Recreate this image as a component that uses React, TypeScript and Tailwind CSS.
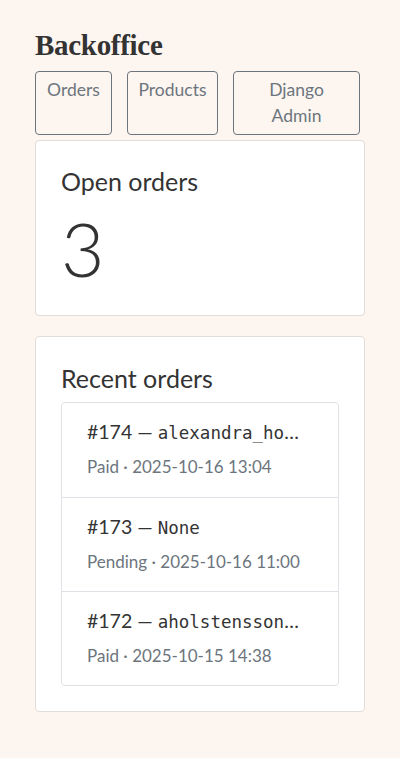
import React from 'react';

const orders = [
  { id: 174, user: 'alexandra_holstensson', status: 'Paid', date: '2025-10-16 13:04' },
  { id: 173, user: 'None', status: 'Pending', date: '2025-10-16 11:00' },
  { id: 172, user: 'aholstensson_test', status: 'Paid', date: '2025-10-15 14:38' },
];

const App: React.FC = () => {
  return (
    <div className="min-h-[758px] bg-[#fdf6f0] px-[35px] pt-[28px] pb-10 font-['Lato','Noto_Sans',sans-serif] text-[#333]">
      <h1 className="font-['Liberation_Serif','DejaVu_Serif',serif] text-[29px] font-bold leading-[34px] tracking-[-0.3px] text-[#333]">
        Backoffice
      </h1>

      {/* Nav buttons */}
      <div className="mt-[9px] flex items-stretch gap-[15px]">
        <a className="w-[77px] rounded border border-[#6c757d] px-2 pt-[5px] text-center text-[17.5px] leading-[26px] text-[#6c757d]">
          Orders
        </a>
        <a className="w-[91px] rounded border border-[#6c757d] px-2 pt-[5px] text-center text-[17.5px] leading-[26px] text-[#6c757d]">
          Products
        </a>
        <a className="w-[127px] rounded border border-[#6c757d] px-2 pt-[5px] pb-[5px] text-center text-[17.5px] leading-[26px] text-[#6c757d]">
          Django
          <br />
          Admin
        </a>
      </div>

      {/* Open orders */}
      <div className="mt-[5px] h-[176px] rounded border border-[#e2ddd8] bg-white px-[25px] pt-[24px]">
        <h2 className="text-[25px] leading-[32px]">Open orders</h2>
        <div className="mt-[6px] text-[75px] font-light leading-[90px]">3</div>
      </div>

      {/* Recent orders */}
      <div className="mt-[20px] rounded border border-[#e2ddd8] bg-white px-[25px] pt-[25px] pb-[25px]">
        <h2 className="text-[25px] leading-[32px]">Recent orders</h2>
        <ul className="mt-[8px] rounded border border-[#dee2e6]">
          {orders.map((o, i) => (
            <li
              key={o.id}
              className={
                'h-[94px] pl-[25px] pr-[32px] pt-[14px] ' + (i > 0 ? 'border-t border-[#dee2e6]' : '')
              }
            >
              <div className="truncate text-[19.5px] leading-[30px] text-[#333]">
                #{o.id} — <span className="font-['DejaVu_Sans_Mono',monospace] text-[17.5px]">{o.user}</span>
              </div>
              <div className="mt-[6px] text-[17px] leading-[26px] text-[#6c757d]">
                {o.status} · {o.date}
              </div>
            </li>
          ))}
        </ul>
      </div>
    </div>
  );
};

export default App;
